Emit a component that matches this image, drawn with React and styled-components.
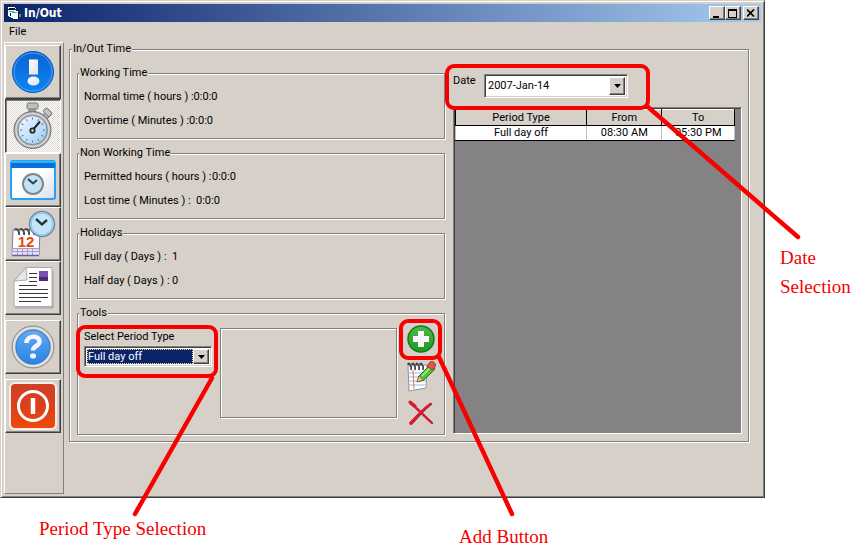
import React, { useState } from 'react';
import styled, { createGlobalStyle, css } from 'styled-components';

const GlobalStyle = createGlobalStyle`
* {
    box-sizing: border-box;
}
body {
    margin: 0;
    background-color: #FFFFFF;
    color: #000000;
    font-family: Roboto, "Liberation Sans", Arial, sans-serif;
    font-size: 11px;
    line-height: 14px;
}
button, select {
    font: inherit;
    color: inherit;
}
`

const raised = css`
border: 1px solid;
border-color: #FFFFFF #404040 #404040 #FFFFFF;
box-shadow: inset -1px -1px 0 #808080;
`

const etched = css`
border: 1px solid #808080;
box-shadow: 1px 1px 0 #FFFFFF, inset 1px 1px 0 #FFFFFF;
`

const Page = styled.div`
display: grid;
grid-template-columns: minmax(0, 1fr) 87px;
`

const Window = styled.main`
display: flex;
flex-direction: column;
background-color: #D6D0C9;
border: 1px solid;
border-color: #D6D0C9 #404040 #404040 #D6D0C9;
box-shadow: inset 1px 1px 0 #FFFFFF, inset -1px -1px 0 #808080;
padding: 3px;
`

const TitleBar = styled.header`
display: flex;
align-items: center;
height: 18px;
padding: 0 2px 0 3px;
background: linear-gradient(to right, #0A246A, #A6CAF0);
`

const WindowTitle = styled.h1`
flex: 1;
margin: 0 0 0 3px;
color: #FFFFFF;
font-family: "DejaVu Sans Condensed", "DejaVu Sans", sans-serif;
font-size: 12px;
font-weight: bold;
`

const TitleButton = styled.button`
${raised}
display: flex;
align-items: center;
justify-content: center;
width: 16px;
height: 14px;
margin-left: ${(props) => (props.$apart ? '2px' : '0')};
padding: 0;
background-color: #D6D0C9;
`

const MenuBar = styled.nav`
display: flex;
height: 20px;
padding: 0 5px;
`

const MenuItem = styled.button`
border: none;
padding: 0;
background: none;
`

const Body = styled.div`
display: flex;
flex: 1;
`

const ToolBar = styled.div`
display: flex;
flex-direction: column;
width: 60px;
padding: 2px 2px 0 0;
border: 1px solid;
border-color: #FFFFFF #808080 #808080 #FFFFFF;
`

const ToolButton = styled.button`
${raised}
display: flex;
align-items: center;
justify-content: center;
height: 54px;
margin-top: ${(props) => (props.$apart ? '5px' : '0')};
padding: 0;
background-color: #D6D0C9;

&[aria-pressed="true"] {
    border-color: #404040 #FFFFFF #FFFFFF #404040;
    box-shadow: inset 1px 1px 0 #808080;
    background: repeating-conic-gradient(#FFFFFF 0 25%, #DCD8D2 0 50%) 0 0 / 2px 2px;
}
`

const Content = styled.div`
flex: 1;
min-width: 0;
padding: 0 12px 52px 5px;
`

const Group = styled.fieldset`
${etched}
min-width: 0;
margin: 0;
padding: ${(props) => props.$padding || '5px 7px 5px 6px'};
`

const Legend = styled.legend`
margin-left: -5px;
padding: 0 1px;
background-color: #D6D0C9;
`

const Columns = styled.div`
display: grid;
grid-template-columns: 368fr 289fr;
gap: 8px;
`

const Groups = styled.div`
display: flex;
flex-direction: column;
gap: 7px;
min-width: 0;
`

const InfoRow = styled.div`
display: flex;
align-items: center;
height: 24px;
`

const InfoLabel = styled.span`
min-width: ${(props) => props.$width}px;
white-space: nowrap;
`

const ToolsRow = styled.div`
display: flex;
align-items: flex-start;
gap: 8px;
`

const PeriodField = styled.div`
position: relative;
flex: 0 0 128px;
padding-top: 5px;
`

const FieldLabel = styled.label`
display: block;
white-space: nowrap;
`

const SelectBox = styled.div`
position: relative;
display: flex;
width: ${(props) => props.$width}px;
height: ${(props) => props.$height}px;
margin-top: ${(props) => props.$top || 0}px;
padding: 2px;
background-color: #FFFFFF;
border: 1px solid;
border-color: #808080 #FFFFFF #FFFFFF #808080;
box-shadow: inset 1px 1px 0 #404040, inset -1px -1px 0 #D6D0C9;
`

const Select = styled.select`
flex: 1;
appearance: none;
margin-right: 16px;
padding: 0 1px;
border: none;
border-radius: 0;
outline: none;
background-color: ${(props) => (props.$active ? '#0A246A' : '#FFFFFF')};
color: ${(props) => (props.$active ? '#FFFFFF' : '#000000')};
${(props) => props.$active && 'outline: 1px dotted #F5DB95; outline-offset: -1px;'}
`

const Arrow = styled.span`
${raised}
position: absolute;
top: 2px;
right: 2px;
bottom: 2px;
display: flex;
align-items: center;
justify-content: center;
width: 16px;
background-color: #D6D0C9;
pointer-events: none;
`

const Preview = styled.div`
${etched}
flex: 1;
height: 90px;
margin-top: 3px;
`

const Actions = styled.div`
display: flex;
flex-direction: column;
align-items: center;
gap: 8px;
width: 32px;
height: 104px;
`

const ActionButton = styled.button`
position: relative;
display: flex;
padding: 0;
border: none;
background: none;
`

const Records = styled.div`
display: flex;
flex-direction: column;
gap: 9px;
min-width: 0;
padding: 8px 0 1px;
`

const DateField = styled.div`
position: relative;
display: flex;
`

const DateLabel = styled(FieldLabel)`
width: 31px;
`

const GridPane = styled.div`
flex: 1;
padding: 1px 6px 0 1px;
background-color: #848284;
border: 1px solid;
border-color: #808080 #FFFFFF #FFFFFF #808080;
box-shadow: inset 1px 1px 0 #404040;
`

const Table = styled.table`
width: 100%;
table-layout: fixed;
border-collapse: collapse;
text-align: center;
`

const HeadCell = styled.th`
width: ${(props) => props.$width};
height: 16px;
padding: 0;
background-color: #D6D0C9;
border: 1px solid #000000;
border-top-color: #FFFFFF;
font-weight: normal;
`

const Cell = styled.td`
height: 15px;
padding: 0;
background-color: #FFFFFF;
border: 1px solid #000000;
border-left-color: #C0C0C0;
border-right-color: #C0C0C0;
`

const CalloutSvg = styled.svg`
position: absolute;
z-index: 2;
left: ${(props) => props.$left}px;
top: ${(props) => props.$top}px;
overflow: visible;
pointer-events: none;
`

const Caption = styled.p`
margin: 0;
color: #F50000;
font-family: "Liberation Serif", "Times New Roman", serif;
font-size: 19px;
line-height: 29px;
`

const SideNotes = styled.aside`
padding: 243px 0 0 15px;
`

const BottomNotes = styled.footer`
display: flex;
grid-column: 1 / -1;
align-items: flex-start;
padding: 16px 0 0 39px;
`

const BottomNote = styled.div`
width: ${(props) => props.$width || 'auto'};
padding-top: ${(props) => (props.$low ? '8px' : '0')};
`

// red frame around a control with a pointer line that starts at its corner
const Callout = ({ left, top, width, height, from, to }) => {
    return (
        <CalloutSvg $left={left} $top={top} width={width} height={height} fill="none" stroke="#F80000" strokeLinecap="round" aria-hidden="true">
            <rect x="0" y="0" width={width} height={height} rx="7" strokeWidth="4" />
            <path d={`M${from[0]} ${from[1]}L${to[0]} ${to[1]}`} strokeWidth="4.4" />
        </CalloutSvg>
    )
}

const FormIcon = () => (
    <svg width="14" height="14" viewBox="0 0 14 14" shapeRendering="crispEdges" aria-hidden="true">
        <path d="M1 1h7v1h1v2H1z" fill="#FFFFFF" />
        <path d="M2 2h6v1H2z" fill="#101010" />
        <path d="M1 4h8v1h2v8H6v-1H4v-1H2v-1H1z" fill="#FFFFFF" />
        <path d="M2 5h5v1h3v1H5V6H2z" fill="#10C8C8" />
        <path d="M1 3h8v1H1zM3 7h1v3H3zM11 5h1v8h-1z" fill="#101010" />
        <path d="M12 8h2v3h-2z" fill="#808080" />
    </svg>
)

const AlertIcon = () => (
    <svg width="42" height="42" viewBox="0 0 42 42" aria-hidden="true">
        <defs>
            <linearGradient id="alertFill" x1="0" y1="0" x2="0" y2="1">
                <stop offset="0" stopColor="#0B63D0" />
                <stop offset="1" stopColor="#0A86F2" />
            </linearGradient>
            <linearGradient id="alertMark" x1="0" y1="0" x2="1" y2="1">
                <stop offset="0" stopColor="#FFFFFF" />
                <stop offset="1" stopColor="#DDE2F2" />
            </linearGradient>
        </defs>
        <circle cx="21" cy="21" r="20.5" fill="url(#alertFill)" stroke="#0E57B8" />
        <circle cx="21" cy="21" r="19" fill="none" stroke="#49A5F8" />
        <path d="M17 8.5h9v15h-9z" fill="url(#alertMark)" />
        <ellipse cx="21.500" cy="30" rx="6" ry="4.500" fill="url(#alertMark)" />
    </svg>
)

const StopwatchIcon = () => {
    const ticks = [0, 30, 60, 90, 120, 150, 180, 210, 240, 270, 300, 330]
    return (
        <svg width="40" height="48" viewBox="0 0 40 48" aria-hidden="true">
            <defs>
                <linearGradient id="watchFace" x1="0" y1="0" x2="1" y2="1">
                    <stop offset="0" stopColor="#F4FAFF" />
                    <stop offset="1" stopColor="#9CCBF6" />
                </linearGradient>
            </defs>
            <path d="M16 5h6v8h-6z" fill="#A5A5A5" stroke="#777777" />
            <rect x="14" y="1" width="11" height="6" rx="1.500" fill="#BEBEBE" stroke="#777777" />
            <path d="M30 13l4-4 4 4-4 4z" fill="#B5B5B5" stroke="#808080" />
            <rect x="31" y="8" width="8" height="5" rx="1" fill="#C5C5C5" stroke="#808080" transform="rotate(45 35 10)" />
            <circle cx="19.500" cy="28" r="18.500" fill="#A9ABAD" stroke="#707070" />
            <circle cx="19.500" cy="28" r="16.500" fill="none" stroke="#D8D8D8" strokeWidth="1.500" />
            <circle cx="19.500" cy="28" r="14.500" fill="url(#watchFace)" stroke="#808890" />
            {ticks.map((tick) => (
                <path key={tick} d="M19.500 15.500v2" stroke="#557799" transform={`rotate(${tick} 19.500 28)`} />
            ))}
            <path d="M18 30L27 19.500" stroke="#202428" strokeWidth="2" />
            <circle cx="19.500" cy="28.500" r="2.200" fill="#D5E5F2" stroke="#202428" strokeWidth="1.800" />
        </svg>
    )
}

const ScheduleIcon = () => (
    <svg width="46" height="40" viewBox="0 0 46 40" aria-hidden="true">
        <defs>
            <linearGradient id="scheduleSheet" x1="0" y1="0" x2="1" y2="1">
                <stop offset=".5" stopColor="#FFFFFF" />
                <stop offset="1" stopColor="#DCD9EE" />
            </linearGradient>
        </defs>
        <rect x="1" y="1" width="44" height="38" rx="2" fill="url(#scheduleSheet)" stroke="#22A4F4" strokeWidth="2" />
        <path d="M1 2h44v6H1z" fill="#0870DC" />
        <path d="M1 1h44v2H1z" fill="#30B4F8" />
        <circle cx="23" cy="24" r="10" fill="#C3E3F5" stroke="#7E878C" strokeWidth="2" />
        <path d="M18 19L23 23.500L27 20" fill="none" stroke="#25444D" strokeWidth="2" />
    </svg>
)

const CalendarIcon = () => (
    <svg width="46" height="48" viewBox="0 0 46 48" aria-hidden="true">
        <path d="M3 20h27l-1 25H2z" fill="#FFFFFF" stroke="#7B78B0" />
        <path d="M3 38h26v7H2z" fill="#E3E0F3" />
        <path d="M2 38.500h27M2 41.500h27M7.500 38v7M12.500 38v7M17.500 38v7M22.500 38v7" stroke="#A49FC8" />
        <path d="M2 45.500h27" stroke="#6C5DA8" strokeWidth="1.500" />
        <path d="M9 25c1-5-4-8-4-5M14 25c1-5-4-8-4-5M19 25c1-5-4-8-4-5M24 25c1-5-4-8-4-5" fill="none" stroke="#494949" strokeWidth="1.800" />
        <text x="16" y="37" textAnchor="middle" fontFamily="Liberation Sans" fontWeight="bold" fontSize="15" fill="#E84810">12</text>
        <circle cx="32" cy="14" r="12.500" fill="#C5E4F7" stroke="#72899A" strokeWidth="1.500" />
        <circle cx="32" cy="14" r="11" fill="none" stroke="#93C7EA" strokeWidth="1.500" />
        <path d="M26 9L32 14.500L37 10" fill="none" stroke="#1C3944" strokeWidth="2.400" />
    </svg>
)

const ReportIcon = () => (
    <svg width="42" height="44" viewBox="0 0 42 44" aria-hidden="true">
        <path d="M14 1.500h26v39H2V15z" fill="#FFFFFF" stroke="#A9A9A9" />
        <path d="M3 42h38V5" fill="none" stroke="#A0A0A0" />
        <path d="M14 1.500L15 14L2 15z" fill="#E7E7E7" stroke="#ABABAB" />
        <path d="M17 7.500h8M17 11.500h8M17 15.500h8M7 19.500h18M7 23.500h29M7 27.500h29M7 31.500h29M7 35.500h22" stroke="#383838" />
        <path d="M27 5h9v10h-9z" fill="#7654AD" />
        <path d="M27 11h9v4h-9z" fill="#4D267E" />
    </svg>
)

const HelpIcon = () => (
    <svg width="44" height="44" viewBox="0 0 44 44" aria-hidden="true">
        <defs>
            <linearGradient id="helpFill" x1="0" y1="0" x2="0" y2="1">
                <stop offset="0" stopColor="#65AAF0" />
                <stop offset="1" stopColor="#2684E8" />
            </linearGradient>
        </defs>
        <circle cx="22" cy="22" r="21" fill="#B8BABD" stroke="#8B8F93" />
        <circle cx="22" cy="22" r="19" fill="none" stroke="#E1E3E5" strokeWidth="2" />
        <circle cx="22" cy="22" r="17" fill="url(#helpFill)" stroke="#3378BC" />
        <path d="M15.500 18c0-8 13-8 13-1.500 0 5-6.500 4-6.500 9" fill="none" stroke="#F5F4FF" strokeWidth="4.500" />
        <rect x="19" y="28.500" width="6" height="5" rx="2" fill="#F5F4FF" />
    </svg>
)

const PowerIcon = () => (
    <svg width="48" height="48" viewBox="0 0 48 48" aria-hidden="true">
        <defs>
            <linearGradient id="powerFill" x1="0" y1="0" x2="0" y2="1">
                <stop offset="0" stopColor="#CF4026" />
                <stop offset=".6" stopColor="#DE4018" />
                <stop offset="1" stopColor="#F04A08" />
            </linearGradient>
        </defs>
        <rect x="1" y="1" width="46" height="46" rx="5" fill="url(#powerFill)" stroke="#F8EDEA" strokeWidth="2" />
        <circle cx="24" cy="24" r="14.500" fill="none" stroke="#FFFFFF" strokeWidth="3" />
        <path d="M24 16v16" stroke="#FFFFFF" strokeWidth="4.500" />
    </svg>
)

const AddIcon = () => (
    <svg width="28" height="28" viewBox="0 0 28 28" aria-hidden="true">
        <defs>
            <linearGradient id="addFill" x1="0" y1="0" x2="0" y2="1">
                <stop offset="0" stopColor="#53B848" />
                <stop offset="1" stopColor="#189A20" />
            </linearGradient>
        </defs>
        <circle cx="14" cy="14" r="13" fill="url(#addFill)" stroke="#147A1C" strokeWidth="1.500" />
        <path d="M11 6h6v5h5v6h-5v5h-6v-5H6v-6h5z" fill="#FAF8FF" />
    </svg>
)

const EditIcon = () => (
    <svg width="30" height="31" viewBox="0 0 30 31" aria-hidden="true">
        <path d="M2 5l19-1-1 23-17 3z" fill="#FFFFFF" stroke="#8A94AA" />
        <path d="M3 12h17M3 16h17M3 20h17M3 24h16" stroke="#9DB7DA" />
        <path d="M7 9l1 19" stroke="#E87348" />
        <path d="M5 9c1-5-3-9-3-5M9 9c1-5-3-9-3-5M13 9c1-5-3-9-3-5M17 9c1-5-3-9-3-5" fill="none" stroke="#383838" strokeWidth="1.600" />
        <path d="M11 21L13 15L24 4L29 8L18 19z" fill="#51BE36" stroke="#28742A" />
        <path d="M16 15L25 6" stroke="#99E471" strokeWidth="2" />
        <path d="M11 21L13 15L17 19z" fill="#EBCB92" stroke="#665033" strokeWidth=".6" />
        <path d="M21 5l3-4c3-2 7 2 5 5l-3 3z" fill="#D95848" stroke="#A63830" />
    </svg>
)

const DeleteIcon = () => (
    <svg width="26" height="26" viewBox="0 0 26 26" fill="none" strokeLinecap="round" aria-hidden="true">
        <path d="M3 24C10 17 16 9 23 4M2 3C10 9 17 17 24 23" stroke="#7A3946" strokeWidth="2.200" />
        <path d="M2.500 23C9 16 15 9 22.500 4" stroke="#DF1730" strokeWidth="2.400" />
        <path d="M2 2C9 8 16 16 23.500 22.500" stroke="#DF1730" strokeWidth="2" />
        <path d="M3 23L7 19M2 2L7 6" stroke="#DF1730" strokeWidth="3" />
    </svg>
)

const DropArrow = () => (
    <Arrow>
        <svg width="7" height="4" viewBox="0 0 7 4" aria-hidden="true">
            <path d="M0 0h7L3.500 4z" fill="#000000" />
        </svg>
    </Arrow>
)

const tools = [
    { name: 'Alerts', icon: <AlertIcon /> },
    { name: 'In/Out', icon: <StopwatchIcon /> },
    { name: 'Schedule', icon: <ScheduleIcon /> },
    { name: 'Calendar', icon: <CalendarIcon /> },
    { name: 'Reports', icon: <ReportIcon /> },
    { name: 'Help', icon: <HelpIcon />, apart: true },
    { name: 'Exit', icon: <PowerIcon />, apart: true },
]

const summary = [
    {
        title: 'Working Time',
        rows: [
            { label: 'Normal time ( hours ) :', value: '0:0:0', width: 104 },
            { label: 'Overtime ( Minutes ) :', value: '0:0:0', width: 104 },
        ],
    },
    {
        title: 'Non Working Time',
        rows: [
            { label: 'Permitted hours ( hours ) :', value: '0:0:0', width: 128 },
            { label: 'Lost time ( Minutes ) :', value: '0:0:0', width: 112 },
        ],
    },
    {
        title: 'Holidays',
        rows: [
            { label: 'Full day ( Days ) :', value: '1', width: 88 },
            { label: 'Half day ( Days ) :', value: '0', width: 88 },
        ],
    },
]

const periods = [
    { type: 'Full day off', from: '08:30 AM', to: '05:30 PM' },
]

export default function App() {
    const [selected, setSelected] = useState('In/Out')

    return (
        <Page>
            <GlobalStyle />
            <Window>
                <TitleBar>
                    <FormIcon />
                    <WindowTitle>In/Out</WindowTitle>
                    <TitleButton aria-label="Minimize">
                        <svg width="10" height="9" viewBox="0 0 10 9"><path d="M1 7h6v2H1z" /></svg>
                    </TitleButton>
                    <TitleButton aria-label="Maximize">
                        <svg width="10" height="9" viewBox="0 0 10 9"><path d="M0 0h9v9H0zM1 2v6h7V2z" fillRule="evenodd" /></svg>
                    </TitleButton>
                    <TitleButton aria-label="Close" $apart>
                        <svg width="8" height="8" viewBox="0 0 8 8"><path d="M0 .5L7 7.500M7 .5L0 7.500" stroke="#000000" strokeWidth="1.700" /></svg>
                    </TitleButton>
                </TitleBar>
                <MenuBar>
                    <MenuItem>File</MenuItem>
                </MenuBar>
                <Body>
                    <ToolBar>
                        {tools.map((tool) => (
                            <ToolButton
                                key={tool.name}
                                aria-label={tool.name}
                                aria-pressed={selected === tool.name}
                                $apart={tool.apart}
                                onClick={() => setSelected(tool.name)}
                            >
                                {tool.icon}
                            </ToolButton>
                        ))}
                    </ToolBar>
                    <Content>
                        <Group $padding="10px 6px 6px 7px">
                            <Legend>In/Out Time</Legend>
                            <Columns>
                                <Groups>
                                    {summary.map((group) => (
                                        <Group key={group.title}>
                                            <Legend>{group.title}</Legend>
                                            {group.rows.map((row) => (
                                                <InfoRow key={row.label}>
                                                    <InfoLabel $width={row.width}>{row.label}</InfoLabel>
                                                    <span>{row.value}</span>
                                                </InfoRow>
                                            ))}
                                        </Group>
                                    ))}
                                    <Group>
                                        <Legend>Tools</Legend>
                                        <ToolsRow>
                                            <PeriodField>
                                                <FieldLabel htmlFor="period">Select Period Type</FieldLabel>
                                                <SelectBox $width={128} $height={21} $top={2}>
                                                    <Select id="period" $active defaultValue="full">
                                                        <option value="full">Full day off</option>
                                                        <option value="half">Half day off</option>
                                                    </Select>
                                                    <DropArrow />
                                                </SelectBox>
                                                <Callout left={-6} top={2} width={138} height={49} from={[134, 51]} to={[57, 187]} />
                                            </PeriodField>
                                            <Preview />
                                            <Actions>
                                                <ActionButton aria-label="Add">
                                                    <AddIcon />
                                                    <Callout left={-6} top={-4} width={39} height={37} from={[38, 36]} to={[111, 193]} />
                                                </ActionButton>
                                                <ActionButton aria-label="Edit">
                                                    <EditIcon />
                                                </ActionButton>
                                                <ActionButton aria-label="Delete">
                                                    <DeleteIcon />
                                                </ActionButton>
                                            </Actions>
                                        </ToolsRow>
                                    </Group>
                                </Groups>
                                <Records>
                                    <DateField>
                                        <DateLabel htmlFor="date">Date</DateLabel>
                                        <SelectBox $width={144} $height={24}>
                                            <Select id="date" defaultValue="2007-01-14">
                                                <option value="2007-01-14">2007-Jan-14</option>
                                            </Select>
                                            <DropArrow />
                                        </SelectBox>
                                        <Callout left={-6} top={-8} width={201} height={42} from={[201, 41]} to={[351, 171]} />
                                    </DateField>
                                    <GridPane>
                                        <Table>
                                            <thead>
                                                <tr>
                                                    <HeadCell $width="47%">Period Type</HeadCell>
                                                    <HeadCell $width="27%">From</HeadCell>
                                                    <HeadCell $width="26%">To</HeadCell>
                                                </tr>
                                            </thead>
                                            <tbody>
                                                {periods.map((period) => (
                                                    <tr key={period.type}>
                                                        <Cell>{period.type}</Cell>
                                                        <Cell>{period.from}</Cell>
                                                        <Cell>{period.to}</Cell>
                                                    </tr>
                                                ))}
                                            </tbody>
                                        </Table>
                                    </GridPane>
                                </Records>
                            </Columns>
                        </Group>
                    </Content>
                </Body>
            </Window>
            <SideNotes>
                <Caption>Date Selection</Caption>
            </SideNotes>
            <BottomNotes>
                <BottomNote $width="420px">
                    <Caption>Period Type Selection</Caption>
                </BottomNote>
                <BottomNote $low>
                    <Caption>Add Button</Caption>
                </BottomNote>
            </BottomNotes>
        </Page>
    )
}
